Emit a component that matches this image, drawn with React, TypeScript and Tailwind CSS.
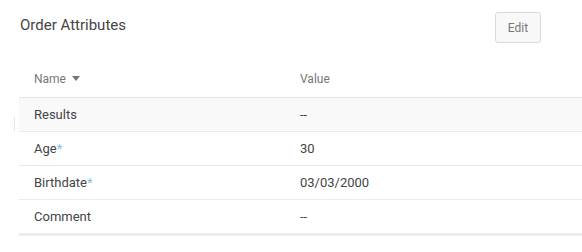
import React from 'react';

const rows = [
  { name: 'Results', value: '--', required: false, highlight: true },
  { name: 'Age', value: '30', required: true, highlight: false },
  { name: 'Birthdate', value: '03/03/2000', required: true, highlight: false },
  { name: 'Comment', value: '--', required: false, highlight: false },
];

const SortCaret = () => (
  <svg className="ml-[6px] inline-block" width="8" height="5" viewBox="0 0 8 5">
    <path d="M0 0h8L4 5z" fill="#777" />
  </svg>
);

export default function App() {
  return (
    <div className="relative h-[252px] w-[582px] overflow-hidden bg-white font-['Roboto',sans-serif] text-[#444]">
      {/* header */}
      <div className="flex items-start justify-between pl-[20px] pr-[41px] pt-[12px]">
        <h2 className="pt-[3px] text-[15px] leading-[20px] text-[#444]">Order Attributes</h2>
        <button className="h-[31px] w-[46px] rounded-[3px] border border-[#d9d9d9] bg-[#f8f8f8] text-[12px] text-[#777]">
          Edit
        </button>
      </div>

      {/* faint scroll marker */}
      <div className="absolute left-[14px] top-[117px] h-[14px] w-px bg-[#e6e6e6]" />

      {/* table */}
      <div className="ml-[19px] mt-[17px] w-[570px] text-[13px] shadow-[0_2px_0_0_#ededed]">
        <div className="flex h-[38px] items-center border-b border-[#e3e3e3] text-[12px] text-[#777]">
          <div className="flex w-[266px] items-center pl-[15px]">
            Name
            <SortCaret />
          </div>
          <div className="pl-[15px]">Value</div>
        </div>
        {rows.map((r) => (
          <div
            key={r.name}
            className={`flex h-[34px] items-center border-b border-[#ebebeb] ${r.highlight ? 'bg-[#f9f9f9]' : 'bg-white'}`}
          >
            <div className="w-[266px] pl-[15px]">
              {r.name}
              {r.required && <span className="text-[#7cc4de]">*</span>}
            </div>
            <div className="pl-[15px]">{r.value}</div>
          </div>
        ))}
      </div>
    </div>
  );
}
